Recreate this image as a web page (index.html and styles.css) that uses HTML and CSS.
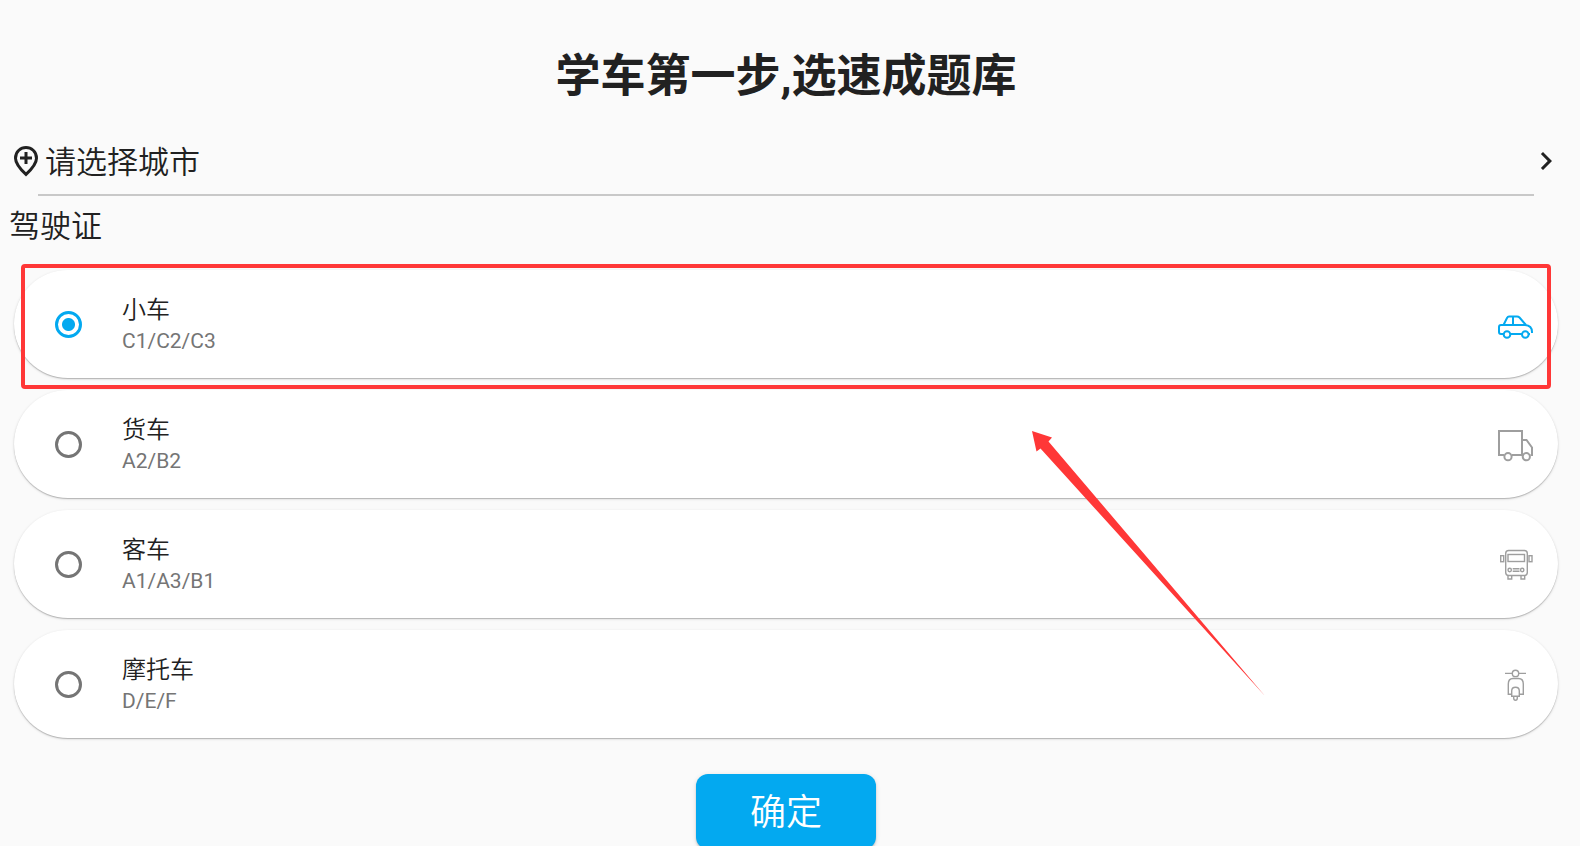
FILE: index.html
```
<!DOCTYPE html>
<html lang="zh-CN">
  <head>
    <meta charset="UTF-8" />
    <meta name="viewport" content="width=device-width, initial-scale=1.0" />
    <title>选择题库</title>
    <link rel="stylesheet" href="styles.css">
  </head>
  <body>
    <form class="page">
      <h1 class="title">学车第一步,选速成题库</h1>

      <button type="button" class="city">
        <svg class="city-icon" viewBox="0 0 24 24" aria-hidden="true">
          <path d="M12 3c3.4 0 7 2.5 7 7.1 0 2.9-2.4 6.5-7 10.8-4.6-4.3-7-7.9-7-10.8C5 5.500 8.600 3 12 3z" fill="none" stroke="currentColor" stroke-width="2" />
          <path d="M12 6v8M8 10h8" fill="none" stroke="currentColor" stroke-width="2" />
        </svg>
        <span class="city-name">请选择城市</span>
        <svg class="city-icon" viewBox="0 0 24 24" aria-hidden="true">
          <path d="M10 6 8.590 7.410 13.170 12l-4.580 4.590L10 18l6-6z" fill="currentColor" />
        </svg>
      </button>
      <hr class="divider" />

      <h2 class="subtitle">驾驶证</h2>

      <div class="cards">
        <label class="card highlighted">
          <input type="radio" name="license" value="car" checked />
          <span class="card-text">
            <span class="card-name">小车</span>
            <span class="card-types">C1/C2/C3</span>
          </span>
          <svg class="card-icon" viewBox="0 0 36 36" stroke-width="2" aria-hidden="true">
            <path d="M6 28H3Q1 28 1 26V21Q1 19 3 19H27Q34 19.500 34 26V27M12.500 28H24M30.500 28H32M5.500 19 9 12Q9.800 10.500 11 10.500H19Q20.500 10.500 21.500 11.500L28 19M15 10.500V19" />
            <circle cx="9" cy="28.500" r="3.300" />
            <circle cx="27.300" cy="28.500" r="3.300" />
          </svg>
        </label>

        <label class="card">
          <input type="radio" name="license" value="truck" />
          <span class="card-text">
            <span class="card-name">货车</span>
            <span class="card-types">A2/B2</span>
          </span>
          <svg class="card-icon" viewBox="0 0 36 36" stroke-width="2" aria-hidden="true">
            <path d="M6 29H1V5H24V29H14M24 14H28.500L34 21.500V29H32.500M24 29H24.500" />
            <circle cx="10" cy="30.700" r="3.600" />
            <circle cx="28.300" cy="30.700" r="3.600" />
          </svg>
        </label>

        <label class="card">
          <input type="radio" name="license" value="bus" />
          <span class="card-text">
            <span class="card-name">客车</span>
            <span class="card-types">A1/A3/B1</span>
          </span>
          <svg class="card-icon" viewBox="0 0 36 36" stroke-width="1.4" aria-hidden="true">
            <rect x="7.700" y="4.500" width="21.600" height="25" rx="3" />
            <rect x="10" y="8.500" width="16.500" height="7" />
            <rect x="2.700" y="9.700" width="3" height="6" />
            <rect x="31" y="9.700" width="3" height="6" />
            <circle cx="11.700" cy="24" r="1.700" />
            <circle cx="24.200" cy="24" r="1.700" />
            <path d="M14.700 22.800H21.500M14.700 25.200H21.500M10 29.500V33H13.700V29.500M23 29.500V33H26.700V29.500" />
          </svg>
        </label>

        <label class="card">
          <input type="radio" name="license" value="motorcycle" />
          <span class="card-text">
            <span class="card-name">摩托车</span>
            <span class="card-types">D/E/F</span>
          </span>
          <svg class="card-icon" viewBox="0 0 36 36" stroke-width="1.4" aria-hidden="true">
            <circle cx="17.500" cy="7.400" r="3.200" />
            <path d="M7 7.400H14.300M20.700 7.400H28M13.700 28.300H10.300V18Q10.300 12.500 15 12.500H20.500Q25.300 12.500 25.300 18V28.300H21.300" />
            <path d="M13.700 30.300V25Q13.700 21.300 17.500 21.300T21.300 25V30.300ZM15.700 30.300V32Q15.700 34.300 17.500 34.300T19.300 32V30.300" />
          </svg>
        </label>

        <svg class="arrow" viewBox="0 0 246 278" aria-hidden="true">
          <path d="M12 11 32 17.500 28.500 21.500 245 276 20.500 28.500 16.500 31.500z" />
        </svg>
      </div>

      <button type="submit" class="confirm">确定</button>
    </form>
  </body>
</html>
```
FILE: styles.css
```
:root {
  --blue: #03a9f0;
  --red: #ff3737;
  --text: #212121;
  --grey: #757575;
}

* {
  box-sizing: border-box;
}

body {
  margin: 0;
  background-color: #fafafa;
  color: var(--text);
  font-family: Roboto, "Noto Sans CJK SC", sans-serif;
  overflow: hidden;
}

.page {
  display: flex;
  flex-direction: column;
  margin-right: 8px;
  padding-top: 44px;
}

.title {
  margin: 0 0 18px;
  font-size: 45px;
  line-height: 66px;
  font-weight: 700;
  text-align: center;
}

.city {
  display: flex;
  align-items: center;
  height: 66px;
  padding: 0 8px;
  border: none;
  background: none;
  color: inherit;
  font-family: inherit;
  font-size: 31px;
  font-weight: 350;
  text-align: left;
  cursor: pointer;
}

.city-icon {
  width: 36px;
  height: 36px;
}

.city-name {
  flex: 1;
  padding: 0 0 4px 1px;
}

.divider {
  align-self: stretch;
  height: 2px;
  margin: 0 38px;
  border: none;
  background-color: #c8c8c8;
}

.subtitle {
  margin: 8px 0 20px;
  padding-left: 9px;
  font-size: 31px;
  line-height: 46px;
  font-weight: 350;
}

.cards {
  position: relative;
  display: flex;
  flex-direction: column;
  gap: 12px;
  padding: 0 14px;
}

.card {
  position: relative;
  display: flex;
  align-items: center;
  gap: 40px;
  height: 108px;
  padding: 0 24px 0 41px;
  border-radius: 54px;
  background-color: white;
  box-shadow: 0 1px 1px rgba(0, 0, 0, 0.2), 0 1px 3px rgba(0, 0, 0, 0.14);
  cursor: pointer;
}

.card input {
  appearance: none;
  width: 27px;
  height: 27px;
  margin: 0;
  border: 3px solid var(--grey);
  border-radius: 50%;
}

.card input:checked {
  border-color: var(--blue);
  background: radial-gradient(circle, var(--blue) 6px, transparent 7px);
}

.card-text {
  flex: 1;
  display: flex;
  flex-direction: column;
  padding-top: 4px;
  line-height: 31px;
}

.card-name {
  font-size: 24px;
  font-weight: 350;
}

.card-types {
  font-size: 21px;
  color: var(--grey);
}

.card-icon {
  width: 36px;
  height: 36px;
  fill: none;
  stroke: #9e9e9e;
}

.card input:checked ~ .card-icon {
  stroke: var(--blue);
}

/* red frame around the recommended option */
.highlighted::after {
  content: "";
  position: absolute;
  z-index: 1;
  top: -6px;
  right: 7px;
  bottom: -11px;
  left: 7px;
  border: 4px solid var(--red);
  border-radius: 4px;
}

.highlighted {
  z-index: 1;
}

.arrow {
  position: absolute;
  z-index: 2;
  top: 150px;
  left: 1020px;
  width: 246px;
  height: 278px;
  fill: var(--red);
  pointer-events: none;
}

.confirm {
  align-self: center;
  width: 180px;
  height: 75px;
  margin-top: 36px;
  padding: 0 0 6px;
  border: none;
  border-radius: 12px;
  background-color: var(--blue);
  color: white;
  font-family: inherit;
  font-size: 36px;
  font-weight: 350;
  box-shadow: 0 3px 1px -2px rgba(0, 0, 0, 0.2), 0 2px 2px rgba(0, 0, 0, 0.14),
    0 1px 5px rgba(0, 0, 0, 0.12);
  cursor: pointer;
}
```
